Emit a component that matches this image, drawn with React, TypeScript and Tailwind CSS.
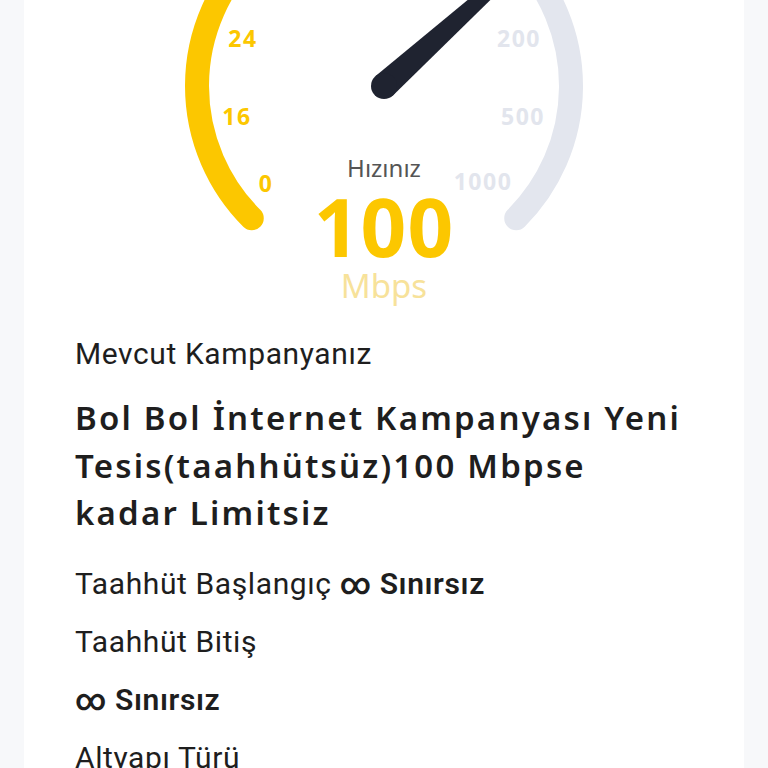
import React from "react";

const CX = 360;
const CY = 86;
const R = 187;

function pt(deg: number, r: number) {
  const a = (deg * Math.PI) / 180;
  return [CX + r * Math.cos(a), CY - r * Math.sin(a)];
}

function arc(from: number, to: number) {
  const [x1, y1] = pt(from, R);
  const [x2, y2] = pt(to, R);
  const large = from - to > 180 ? 1 : 0;
  return `M ${x1} ${y1} A ${R} ${R} 0 ${large} 1 ${x2} ${y2}`;
}

function Gauge() {
  const needle = 42;
  const [tx, ty] = pt(needle, 190);
  const a = (needle * Math.PI) / 180;
  const nx = Math.sin(a);
  const ny = Math.cos(a);
  const base = 13;
  const tip = 5;
  const poly = [
    [CX + nx * base, CY + ny * base],
    [tx + nx * tip, ty + ny * tip],
    [tx - nx * tip, ty - ny * tip],
    [CX - nx * base, CY - ny * base],
  ]
    .map(p => p.join(","))
    .join(" ");

  const yellowLabels = [
    { t: "0", x: 242, y: 192 },
    { t: "16", x: 213, y: 125 },
    { t: "24", x: 219, y: 47 },
  ];
  const grayLabels = [
    { t: "1000", x: 459, y: 190 },
    { t: "500", x: 499, y: 125 },
    { t: "200", x: 495, y: 47 },
  ];

  return (
    <div className="relative h-[310px]">
      <svg width="720" height="310" viewBox="0 0 720 310" className="block">
        <path d={arc(225, 44)} fill="none" stroke="#fcc700" strokeWidth="24" strokeLinecap="round" />
        <path d={arc(44, -45)} fill="none" stroke="#e3e6ee" strokeWidth="24" strokeLinecap="round" />
        {yellowLabels.map(l => (
          <text key={l.t} x={l.x} y={l.y} textAnchor="middle" fill="#fcc700" fontSize="23" fontWeight="700" letterSpacing="1.5" fontFamily="'Noto Sans', sans-serif">
            {l.t}
          </text>
        ))}
        {grayLabels.map(l => (
          <text key={l.t} x={l.x} y={l.y} textAnchor="middle" fill="#e2e5ed" fontSize="23" fontWeight="700" letterSpacing="1.5" fontFamily="'Noto Sans', sans-serif">
            {l.t}
          </text>
        ))}
        <polygon points={poly} fill="#1f2330" />
        <circle cx={CX} cy={CY} r={base} fill="#1f2330" />
      </svg>
      <div className="absolute left-0 right-0 top-[150px] flex flex-col items-center font-['Noto_Sans',sans-serif]">
        <span className="text-[24px] leading-[36px] text-[#555]">Hızınız</span>
        <span className="text-[80px] leading-[80px] font-bold tracking-[1px] text-[#fcc700]">100</span>
        <span className="text-[33px] leading-[40px] text-[#f7e29a]">Mbps</span>
      </div>
    </div>
  );
}

export default function App() {
  return (
    <main className="min-h-screen bg-[#f7f8fa] px-6">
      <div className="bg-white min-h-screen">
        <Gauge />
        <div className="px-[51px] text-[#1e1e1e]">
          <p className="font-['Roboto',sans-serif] text-[30px] leading-[40px] tracking-[0.6px] mt-[24px]">Mevcut Kampanyanız</p>
          <h2 className="max-w-[612px] font-['Noto_Sans',sans-serif] font-semibold text-[33px] leading-[47.5px] tracking-[2.2px] mt-[20px]">
            Bol Bol İnternet Kampanyası Yeni Tesis(taahhütsüz)100 Mbpse kadar Limitsiz
          </h2>
          <div className="font-['Roboto',sans-serif] text-[30px] leading-[58px] tracking-[0.6px] mt-[18px]">
            <p>
              Taahhüt Başlangıç <span className="font-semibold">∞ Sınırsız</span>
            </p>
            <p>Taahhüt Bitiş</p>
            <p className="font-semibold">∞ Sınırsız</p>
            <p>Altyapı Türü</p>
          </div>
        </div>
      </div>
    </main>
  );
}
